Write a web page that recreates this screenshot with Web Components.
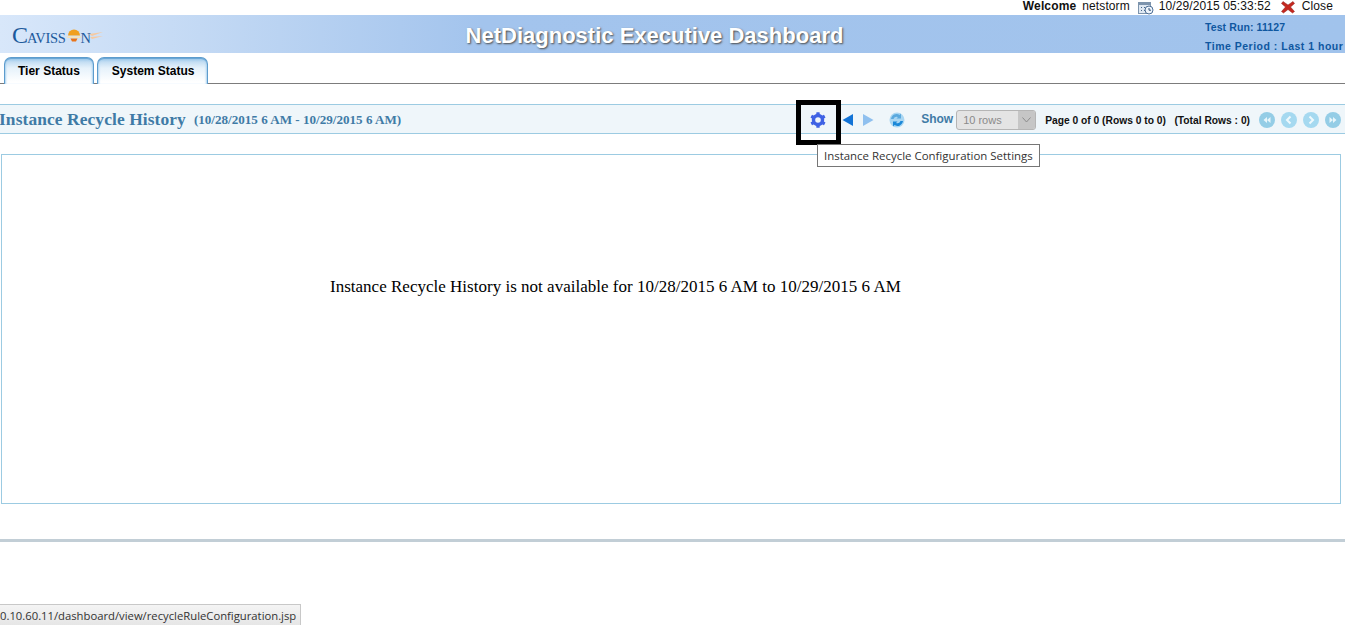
<!DOCTYPE html>
<html><head><meta charset="utf-8"><title>NetDiagnostic Executive Dashboard</title>
<style>
html,body{margin:0;padding:0;background:#fff}
body{width:1345px;height:625px;overflow:hidden;position:relative;font-family:"Liberation Sans",Arial,sans-serif}
</style></head><body>
<nd-page></nd-page>
<script>
const def=(n,html)=>customElements.define(n,class extends HTMLElement{constructor(){super();this.attachShadow({mode:'open'}).innerHTML=html}});
def('nd-topbar',`<style>
:host{display:flex;justify-content:flex-end;align-items:center;height:15px;font:12px/14px "Liberation Sans",Arial,sans-serif;color:#111;padding-right:12px;white-space:nowrap}
b{margin-right:6px;letter-spacing:.15px;position:relative;top:-2px}
svg{display:block}
.cal{margin:1px 5px 0 8px}.x{margin:0 7px 0 10px}
span{position:relative;top:-2px;letter-spacing:.1px}
</style><b>Welcome</b><span>netstorm</span>
<svg class="cal" width="16" height="14" viewBox="0 0 16 14"><rect x=".5" y="1.5" width="12" height="11" fill="#dfe8f2" stroke="#7d94ad"/><rect x="1" y="2" width="11" height="2" fill="#7d94ad"/><path d="M3 6h1v1H3zM6 6h1v1H6zM9 6h1v1H9zM3 9h1v1H3zM6 9h1v1H6z" fill="#47688c"/><circle cx="11" cy="9" r="4" fill="#eef4fa" stroke="#4d6f96"/><path d="M11 7v2.2h2" fill="none" stroke="#33517a"/></svg>
<span>10/29/2015 05:33:52</span>
<svg class="x" width="14" height="13" viewBox="0 0 14 13"><path d="M2 .5l5 3.500 5-3.500 1.500 2L9.500 6l4 4.500-2 1.500L7 8.500 2.500 12l-2-1.500 4-4.500-4-3.500z" fill="#c5281f" stroke="#8f1e18" stroke-width=".5"/></svg>
<span>Close</span>`);
def('nd-logo',`<style>
:host{display:flex;align-items:baseline;font-family:"Liberation Serif",serif;color:#1d5a9c;white-space:nowrap;height:38px;padding:0 0 0 12px;line-height:40px}
.c{font-size:24px;margin-right:-1px}.t{font-size:14.500px;letter-spacing:-.3px}
svg{align-self:center;flex:none;margin:3px -1px 0 0}
.n{font-size:14.500px;color:#1d5a9c}
.tail{align-self:center;margin:3px 0 0 -2px}
</style><span class="c">C</span><span class="t">AVISS</span>
<svg width="16" height="15" viewBox="0 0 16 15"><path d="M2 7.500a6 6 0 0 1 12 0z" fill="#f0a020"/><path d="M0 8.500h16l-2 1.500H2z" fill="#fbe3b0"/><path d="M4.500 10.500h7L10 13.500H6z" fill="#e8741a"/></svg>
<span class="n">N</span>
<svg class="tail" width="14" height="10" viewBox="0 0 14 10"><path d="M0 3L14 1 3 5zM1 6l13-1-11 3z" fill="#f6c9a0"/></svg>`);
def('nd-header',`<style>
:host{display:grid;grid-template-columns:1fr auto;position:relative;height:38px;background:linear-gradient(90deg,#d8e7fa 0,#c3d9f4 200px,#a3c4ed 480px,#a1c3ec 100%);}
.title{position:absolute;left:0;right:0;top:0;text-align:center;padding-right:36px;font:bold 22px/41px "Liberation Sans",Arial,sans-serif;color:#fff;text-shadow:1px 1px 2px #4a4a4a}
.info{display:flex;flex-direction:column;font:bold 10.500px/19px "Liberation Sans",Arial,sans-serif;color:#0f57a0;padding:3px 2px 0 0;width:138px;white-space:nowrap;letter-spacing:.1px}
.wide{letter-spacing:.5px}
</style><div><nd-logo></nd-logo></div><div class="title">NetDiagnostic Executive Dashboard</div>
<div class="info"><span>Test Run: 11127</span><span class="wide">Time Period : Last 1 hour</span></div>`);
def('nd-tab',`<style>
:host{display:block;box-sizing:border-box;height:27px;border:1px solid #5d9ccd;border-bottom:0;border-radius:7px 7px 0 0;background:linear-gradient(180deg,#8fc1e8 0,#c4def3 4px,#e6f2fb 10px,#ffffff 24px);font:bold 12px/27px "Liberation Sans",Arial,sans-serif;color:#000;padding:0 13px 0 13px;white-space:nowrap;box-shadow:inset 0 1px 0 #6aa7d6,inset 2px 0 2px -1px #a9d0ee,inset -2px 0 2px -1px #a9d0ee}
:host(.second){padding:0 12px 0 14px}
</style><slot></slot>`);
def('nd-tabs',`<style>
:host{display:flex;gap:3px;box-sizing:border-box;height:31px;padding:4px 0 0 4px;border-bottom:1px solid #7c7c7c;}
</style><nd-tab>Tier Status</nd-tab><nd-tab class="second">System Status</nd-tab>`);
def('nd-titlebar',`<style>
:host{display:flex;align-items:center;box-sizing:border-box;height:30px;margin-top:20px;padding-top:2px;background:#eff6fa;border-top:1px solid #9ccbe2;border-bottom:1px solid #9ccbe2;white-space:nowrap;position:relative}
h1{margin:0 0 0 -1px;font:bold 17.400px/1 "Liberation Serif",serif;color:#3f7ba6;letter-spacing:.1px}
.d{font:bold 13.100px "Liberation Serif",serif;color:#3f7ba6;margin-left:8px}
.sp{flex:1}
.ctl{display:flex;align-items:center;height:100%}
svg{display:block;flex:none}
.show{font:bold 12px "Liberation Sans",Arial,sans-serif;color:#3f7ba6;margin:-2px 3px 0 0}
.sel{box-sizing:border-box;width:80px;height:20px;border:1px solid #b5b5b5;border-radius:3px;background:#e4e4e4;font:11px/18px "Liberation Sans",Arial,sans-serif;color:#8a8a8a;padding-left:6px;position:relative;margin-right:9px}
.sel i{position:absolute;right:0;top:0;bottom:0;width:17px;background:#c6c6c6;border-radius:0 2px 2px 0;display:flex;align-items:center;justify-content:center}
.pg{font:bold 10.250px "Liberation Sans",Arial,sans-serif;color:#111;margin-right:9px}
.btns{display:flex;gap:6px;margin-right:4px}
.btns svg circle{fill:#a5d9f0}
</style>
<h1>Instance Recycle History</h1><span class="d">(10/28/2015 6 AM - 10/29/2015 6 AM)</span><span class="sp"></span>
<div class="ctl">
<svg style="margin-right:16px" width="16" height="16" viewBox="0 0 16 16"><circle cx="8" cy="8" r="4.500" fill="none" stroke="#3f62e4" stroke-width="3.400"/><g fill="#3f62e4"><rect x="6.300" y=".2" width="3.400" height="3.500" rx=".5"/><rect x="6.300" y=".2" width="3.400" height="3.500" rx=".5" transform="rotate(60 8 8)"/><rect x="6.300" y=".2" width="3.400" height="3.500" rx=".5" transform="rotate(120 8 8)"/><rect x="6.300" y=".2" width="3.400" height="3.500" rx=".5" transform="rotate(180 8 8)"/><rect x="6.300" y=".2" width="3.400" height="3.500" rx=".5" transform="rotate(240 8 8)"/><rect x="6.300" y=".2" width="3.400" height="3.500" rx=".5" transform="rotate(300 8 8)"/></g></svg>
<svg style="margin-right:8px" width="12" height="14" viewBox="0 0 12 14"><path d="M11 1v12L.5 7z" fill="#1273d6"/></svg>
<svg style="margin-right:15px" width="12" height="14" viewBox="0 0 12 14"><path d="M1 1v12l10.500-6z" fill="#8fc0ef"/></svg>
<svg style="margin-right:16px" width="16" height="16" viewBox="0 0 16 16"><circle cx="8" cy="8" r="7.500" fill="#a9d6f2"/><path d="M2 7a5.500 5.500 0 0 1 8.500-4L12 1.500v5H7.500l1.500-1.500A3.500 3.500 0 0 0 4.500 7z" fill="#5aa9de"/><path d="M14 9a5.500 5.500 0 0 1-8.500 4L4 14.500v-5h4.500L7 11a3.500 3.500 0 0 0 4.500-2z" fill="#1b88d8"/></svg>
<span class="show">Show</span>
<div class="sel">10 rows<i><svg width="9" height="6" viewBox="0 0 9 6"><path d="M.5.500L4.500 5l4-4.500" fill="none" stroke="#8c8c8c"/></svg></i></div>
<span class="pg">Page 0 of 0 (Rows 0 to 0)&nbsp;&nbsp;&nbsp;(Total Rows : 0)</span>
<div class="btns">
<svg width="16" height="16" viewBox="0 0 16 16"><circle cx="8" cy="8" r="8" style="fill:#94cde6"/><path d="M8 5v6L4.500 8zM11.500 5v6L8 8z" fill="#e8f6fb"/></svg>
<svg width="16" height="16" viewBox="0 0 16 16"><circle cx="8" cy="8" r="8"/><path d="M9.500 4.500L6 8l3.500 3.500" fill="none" stroke="#eef9fd" stroke-width="2"/></svg>
<svg width="16" height="16" viewBox="0 0 16 16"><circle cx="8" cy="8" r="8"/><path d="M6.500 4.500L10 8l-3.500 3.500" fill="none" stroke="#eef9fd" stroke-width="2"/></svg>
<svg width="16" height="16" viewBox="0 0 16 16"><circle cx="8" cy="8" r="8" style="fill:#94cde6"/><path d="M4.500 5v6L8 8zM8 5v6l3.500-3z" fill="#e8f6fb"/></svg>
</div></div>`);
def('nd-empty',`<style>
:host{display:block;box-sizing:border-box;height:350px;margin:20px 4px 0 1px;border:1px solid #9ccbe2;background:#fff;font:17px/1 "Liberation Serif",serif;color:#000;padding:123px 0 0 328px;white-space:nowrap;letter-spacing:.012px}
</style><slot></slot>`);
def('nd-tooltip',`<style>
:host{position:absolute;left:817px;top:144px;box-sizing:border-box;width:223px;height:23px;border:1px solid #767676;background:#fff;font:11.450px/22px "Open Sans","Liberation Sans",sans-serif;color:#333;padding-left:6px;white-space:nowrap}
</style><slot></slot>`);
def('nd-status',`<style>
:host{position:absolute;left:0;bottom:0;box-sizing:border-box;width:301px;height:21px;border:1px solid #c8c8c8;border-left:0;border-bottom:0;background:linear-gradient(#f4f4f4,#e6e6e6);font:11.270px/21px "Open Sans","Liberation Sans",sans-serif;color:#333;white-space:nowrap}
</style><slot></slot>`);
def('nd-page',`<style>
:host{display:block}
.hl{position:absolute;left:796px;top:100px;width:45px;height:45px;box-sizing:border-box;border:5px solid #000}
hr{margin:35px 0 0;height:3px;border:0;background:#c2ced6}
</style>
<nd-topbar></nd-topbar><nd-header></nd-header><nd-tabs></nd-tabs><nd-titlebar></nd-titlebar>
<nd-empty>Instance Recycle History is not available for 10/28/2015 6 AM to 10/29/2015 6 AM</nd-empty>
<hr>
<div class="hl"></div>
<nd-tooltip>Instance Recycle Configuration Settings</nd-tooltip>
<nd-status>0.10.60.11/dashboard/view/recycleRuleConfiguration.jsp</nd-status>`);
</script></body></html>
